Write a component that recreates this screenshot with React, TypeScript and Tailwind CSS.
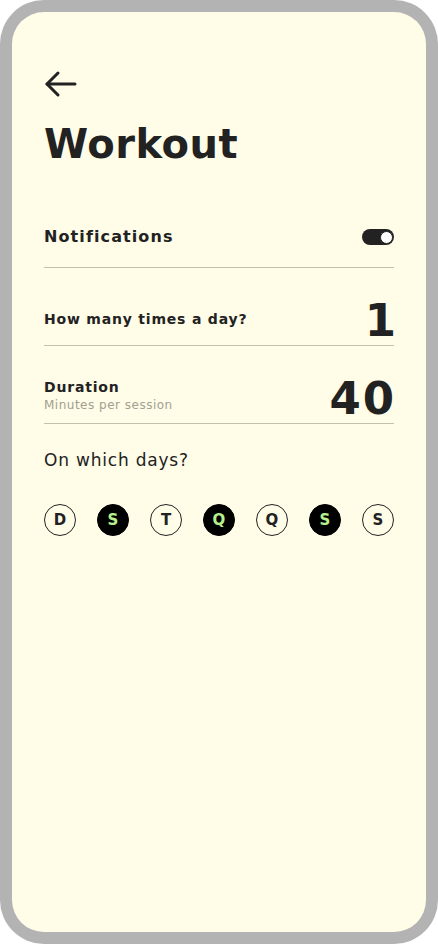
import { useState } from 'react'

const DAYS = [
  { l: 'D', on: false },
  { l: 'S', on: true },
  { l: 'T', on: false },
  { l: 'Q', on: true },
  { l: 'Q', on: false },
  { l: 'S', on: true },
  { l: 'S', on: false },
]

export default function App() {
  const [notif, setNotif] = useState(true)
  const [days, setDays] = useState(DAYS.map(d => d.on))

  return (
    <div className="h-[944px] w-[438px] bg-white">
      <div className="h-full w-full rounded-[44px] bg-[#b3b3b3] p-3">
        <div
          className="h-full w-full rounded-[32px] bg-[#fffce7] px-8 pt-[58px] text-[#222]"
          style={{ fontFamily: '"DejaVu Sans", "Noto Sans", sans-serif' }}
        >
          {/* back */}
          <button className="block h-[28px] w-[34px]">
            <svg width="34" height="28" viewBox="0 0 34 28" fill="none" stroke="#222" strokeWidth="3" strokeLinecap="round" strokeLinejoin="round">
              <path d="M31 14H3" />
              <path d="M14 3L3 14l11 11" />
            </svg>
          </button>

          <h1 className="mt-[22px] text-[40px] leading-[48px] font-bold tracking-[0.5px]">Workout</h1>

          {/* notifications */}
          <div className="mt-[41px] flex h-[59px] items-center justify-between border-b border-[#c4c0ae] pb-[2px]">
            <span className="text-[16px] font-bold tracking-[1.1px]">Notifications</span>
            <button
              onClick={() => setNotif(!notif)}
              className={`relative h-4 w-8 rounded-full ${notif ? 'bg-[#222]' : 'bg-[#bbb]'}`}
            >
              <span className={`absolute top-[1.5px] h-[13px] w-[13px] rounded-full border border-[#222] bg-white ${notif ? 'left-[17.5px]' : 'left-[1.5px]'}`} />
            </button>
          </div>

          {/* times a day */}
          <div className="flex h-[78px] items-center justify-between border-b border-[#c4c0ae] pt-[27px]">
            <span className="-mt-[2px] text-[14px] font-bold tracking-[0.8px]">How many times a day?</span>
            <span className="-mr-[2px] text-[45px] leading-none font-bold">1</span>
          </div>

          {/* duration */}
          <div className="flex h-[78px] items-center justify-between border-b border-[#c4c0ae] pt-[22px]">
            <div className="flex flex-col">
              <span className="text-[14px] leading-[19px] font-bold tracking-[0.8px]">Duration</span>
              <span className="text-[12px] leading-[16px] tracking-[0.5px] text-[#a29f92]">Minutes per session</span>
            </div>
            <span className="-mr-[2px] mt-[6px] text-[45px] leading-none font-bold tracking-[2px]">40</span>
          </div>

          <p className="mt-[25px] text-[17px] leading-[22px] tracking-[0.8px]">On which days?</p>

          <div className="mt-[33px] flex justify-between">
            {DAYS.map((d, i) => (
              <button
                key={i}
                onClick={() => setDays(prev => prev.map((v, j) => (j === i ? !v : v)))}
                className={`flex h-8 w-8 items-center justify-center rounded-full border text-[15px] font-bold ${
                  days[i] ? 'border-black bg-black text-[#b9f08e]' : 'border-[#222] text-[#222]'
                }`}
              >
                {d.l}
              </button>
            ))}
          </div>
        </div>
      </div>
    </div>
  )
}
